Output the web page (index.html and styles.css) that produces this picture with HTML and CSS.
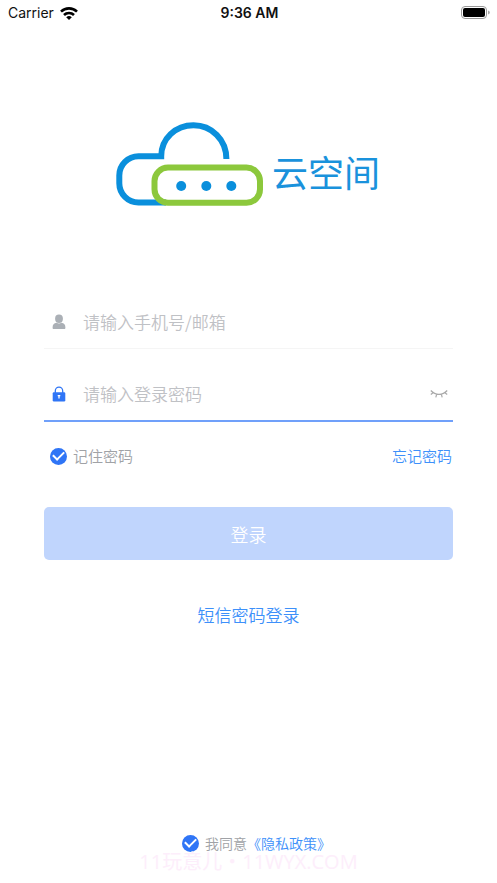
FILE: index.html
```html
<!DOCTYPE html>
<html lang="zh-CN">
<head>
<meta charset="utf-8">
<meta name="viewport" content="width=device-width, initial-scale=1">
<title>云空间</title>
<link rel="stylesheet" href="styles.css">
</head>
<body>
<div class="app">
  <header class="status">
    <div class="status-left">
      <span>Carrier</span>
      <svg class="wifi" viewBox="0 0 18 13" aria-hidden="true">
        <g fill="none" stroke="#000" stroke-width="2.6">
          <path d="M1 4.600a11.500 11.500 0 0 1 16 0"/>
          <path d="M4 8a7.100 7.100 0 0 1 10 0"/>
        </g>
        <path d="M9 13 6.200 10.300a4 4 0 0 1 5.600 0z"/>
      </svg>
    </div>
    <span class="clock">9:36 AM</span>
    <div class="status-right">
      <svg class="battery" viewBox="0 0 30 14" aria-hidden="true">
        <rect x="0.5" y="0.5" width="25" height="12" rx="3.5" fill="none" stroke="#999"/>
        <rect x="2" y="2" width="22" height="9" rx="2"/>
        <path d="M27.300 4.600v4c1.800-.8 1.800-3.200 0-4z" fill="#888"/>
      </svg>
    </div>
  </header>

  <main class="login">
    <h1 class="brand">
      <svg class="cloud" viewBox="115 122 148 85" aria-hidden="true">
        <g fill="none" stroke-width="6">
          <path stroke="#0a8fdc" d="M165 202.500H137.500a19.200 19.200 0 0 1-19.200-19.200V175.500a19.200 19.200 0 0 1 19.200-19.200H160.200C160.200 138.500 174.500 125.200 192.500 125.200S225.400 139.500 225.400 159"/>
          <rect stroke="#8cc83c" x="153.500" y="167.600" width="105.500" height="35.200" rx="13.500"/>
        </g>
        <g fill="#0a8fdc">
          <circle cx="180.200" cy="186" r="5"/>
          <circle cx="205.300" cy="186" r="5"/>
          <circle cx="230.300" cy="186" r="5"/>
        </g>
      </svg>
      <span class="brand-name">云空间</span>
    </h1>

    <form class="form">
      <div class="field">
        <label for="account" aria-label="手机号或邮箱">
          <svg class="icon" viewBox="0 0 16 16" aria-hidden="true" fill="#abb0b6">
            <ellipse cx="8" cy="4.700" rx="3.900" ry="4.200"/>
            <path d="M1.600 13.400c0-2.800 1.200-4 4-4.600 1.500.8 3.300.8 4.800 0 2.800.6 4 1.800 4 4.600 0 1.300-.3 1.600-1.200 1.600H2.800c-.9 0-1.200-.3-1.200-1.600z"/>
          </svg>
        </label>
        <input id="account" type="text" placeholder="请输入手机号/邮箱">
      </div>

      <div class="field field-active">
        <label for="password" aria-label="登录密码">
          <svg class="icon" viewBox="0 0 16 16" aria-hidden="true">
            <path d="M4.300 8V5a3.700 3.900 0 0 1 7.400 0v3" fill="none" stroke="#2f75f6" stroke-width="1.300"/>
            <rect x="1.700" y="6.300" width="12.600" height="9.200" rx="1.200" fill="#2f75f6"/>
            <path d="M8 9v3.600M6.700 9.700h2.600" stroke="#fff" stroke-width="1.300"/>
          </svg>
        </label>
        <input id="password" type="password" placeholder="请输入登录密码">
        <button class="reveal" type="button" aria-label="显示密码">
          <svg viewBox="0 0 18 10" aria-hidden="true" fill="none" stroke="#aaa" stroke-width="1.200">
            <path d="M.8 1.500C5.500 6.700 12.500 6.700 17.200 1.500M3.400 3.500.8 5.500M6.700 5.200 5.800 8.400M11.300 5.200l.9 3.200M14.600 3.500l2.600 2"/>
          </svg>
        </button>
      </div>

      <div class="options">
        <label class="check"><input type="checkbox" checked><span>记住密码</span></label>
        <a class="link" href="#forgot">忘记密码</a>
      </div>

      <button class="submit" type="submit">登录</button>
      <a class="link sms" href="#sms">短信密码登录</a>
    </form>
  </main>

  <footer class="footer">
    <label class="check"><input type="checkbox" checked><span>我同意</span></label><a class="link" href="#privacy">《隐私政策》</a>
    <span class="watermark">11玩意儿・11WYX.COM</span>
  </footer>
</div>
</body>
</html>
```
FILE: styles.css
```css
* {
  box-sizing: border-box;
}

body {
  margin: 0;
  background: #fff;
  font-family: "Noto Sans CJK SC", sans-serif;
  font-weight: 350;
}

.app {
  display: flex;
  flex-direction: column;
  min-height: 100vh;
}

.status {
  display: grid;
  grid-template-columns: 1fr auto 1fr;
  align-items: center;
  height: 26px;
  padding: 0 6px 0 8px;
  font: 400 14px/26px Inter, sans-serif;
  color: #111;
}

.status-left {
  display: flex;
  align-items: center;
  gap: 6px;
}

.wifi {
  width: 18px;
  height: 13px;
}

.clock {
  font-weight: 600;
}

.status-right {
  display: flex;
  justify-content: flex-end;
}

.battery {
  width: 30px;
  height: 14px;
}

.login {
  padding: 96px 44px 32px;
}

.brand {
  display: flex;
  justify-content: center;
  align-items: center;
  gap: 8px;
  margin: 0;
  padding-right: 1px;
}

.cloud {
  width: 148px;
  height: 85px;
}

.brand-name {
  padding-top: 12px;
  font-size: 36px;
  font-weight: 400;
  line-height: 48px;
  color: #1a92dc;
}

.form {
  display: flex;
  flex-direction: column;
  margin-top: 88px;
}

.field {
  display: flex;
  align-items: center;
  height: 54px;
  padding: 0 5px 0 7px;
  border-bottom: 1px solid #f5f5f5;
}

.field-active {
  height: 55px;
  margin-top: 18px;
  border-bottom: 2px solid #70a0fa;
}

.field input {
  flex: 1;
  min-width: 0;
  margin-left: 16px;
  padding: 0;
  border: 0;
  outline: 0;
  background: none;
  font: inherit;
  font-size: 17px;
  line-height: 26px;
  color: #333;
}

.field input::placeholder {
  color: #bfc1c5;
  opacity: 1;
}

.icon {
  display: block;
  width: 16px;
  height: 16px;
}

.reveal {
  padding: 0;
  border: 0;
  background: none;
}

.reveal svg {
  display: block;
  width: 18px;
  height: 10px;
}

.options {
  display: flex;
  justify-content: space-between;
  align-items: center;
  margin-top: 22px;
  padding: 0 1px 0 6px;
  font-size: 15px;
  line-height: 24px;
}

.check {
  display: flex;
  align-items: center;
  gap: 6px;
  color: #a0a2a6;
}

.check input {
  appearance: none;
  width: 17px;
  height: 17px;
  margin: 0;
  border: 1px solid #c5c8cc;
  border-radius: 50%;
}

.check input:checked {
  display: grid;
  place-items: center;
  border: 0;
  background: #2f75f6;
}

.check input:checked::before {
  content: "";
  width: 9px;
  height: 5px;
  margin-bottom: 3px;
  border: solid #fff;
  border-width: 0 0 2px 2px;
  transform: rotate(-45deg);
}

.link {
  color: #3d90fa;
  text-decoration: none;
}

.submit {
  height: 53px;
  margin-top: 39px;
  border: 0;
  border-radius: 5px;
  background: #c0d5fd;
  font: inherit;
  font-size: 18px;
  color: #fff;
}

.sms {
  align-self: center;
  margin-top: 42px;
  font-size: 17px;
  line-height: 26px;
}

.footer {
  position: relative;
  display: flex;
  justify-content: center;
  align-items: center;
  margin-top: auto;
  padding: 0 0 28px 16px;
  font-size: 14px;
  line-height: 24px;
}

.watermark {
  position: absolute;
  top: 17px;
  left: 0;
  right: 0;
  font-family: "Open Sans", "Noto Sans CJK SC", sans-serif;
  font-size: 20px;
  font-weight: 400;
  line-height: 28px;
  text-align: center;
  color: #fdeefb;
  pointer-events: none;
}
```
